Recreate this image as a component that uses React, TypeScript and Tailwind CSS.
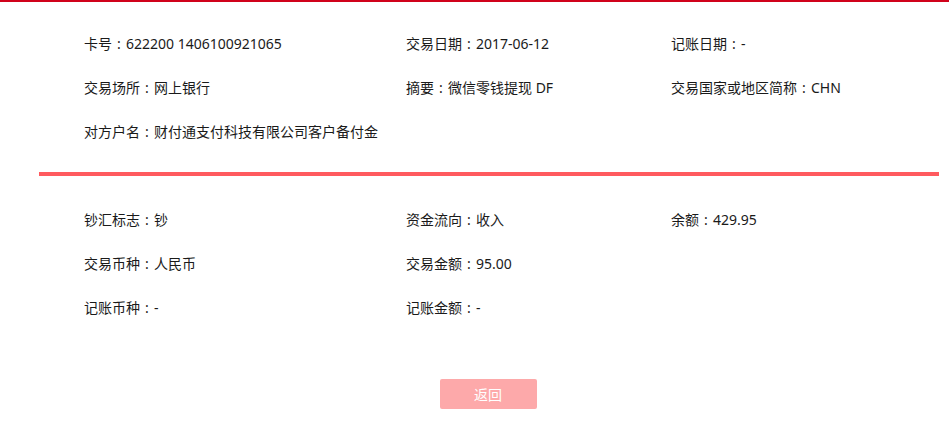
const TOP_ROWS: [string, string][][] = [
  [
    ['卡号', '622200 1406100921065'],
    ['交易日期', '2017-06-12'],
    ['记账日期', '-'],
  ],
  [
    ['交易场所', '网上银行'],
    ['摘要', '微信零钱提现 DF'],
    ['交易国家或地区简称', 'CHN'],
  ],
  [['对方户名', '财付通支付科技有限公司客户备付金']],
]

const BOTTOM_ROWS: [string, string][][] = [
  [
    ['钞汇标志', '钞'],
    ['资金流向', '收入'],
    ['余额', '429.95'],
  ],
  [
    ['交易币种', '人民币'],
    ['交易金额', '95.00'],
  ],
  [
    ['记账币种', '-'],
    ['记账金额', '-'],
  ],
]

const COL_WIDTHS = ['w-[322px]', 'w-[265px]', 'w-[240px]']

function Rows({ rows }: { rows: [string, string][][] }) {
  return (
    <div className="pl-[45px]">
      {rows.map((row, i) => (
        <div key={i} className="flex h-[44px] items-center">
          {row.map(([label, value], j) => (
            <div key={label} className={`${COL_WIDTHS[j]} shrink-0 whitespace-nowrap`}>
              {label}
              <span className="inline-block w-[14px] text-center">:</span>
              {value}
            </div>
          ))}
        </div>
      ))}
    </div>
  )
}

export default function App() {
  return (
    <div
      className="min-h-[431px] w-[949px] bg-white text-[14px] text-[#1a1a1a] border-t-2 border-[#d0021b]"
      style={{ fontFamily: '"Noto Sans", "Noto Sans CJK SC", sans-serif' }}
    >
      <div className="ml-[39px] w-[900px]">
        <div className="pt-[19px] pb-[19px]">
          <Rows rows={TOP_ROWS} />
        </div>
        <div className="h-[4px] bg-[#ff5a5f]" />
        <div className="pt-[21px]">
          <Rows rows={BOTTOM_ROWS} />
        </div>
        <div className="flex justify-center pt-[50px] pr-[2px]">
          <button className="h-[30px] w-[97px] rounded-[2px] bg-[#fda9aa] text-[14px] text-white">
            返回
          </button>
        </div>
      </div>
    </div>
  )
}
